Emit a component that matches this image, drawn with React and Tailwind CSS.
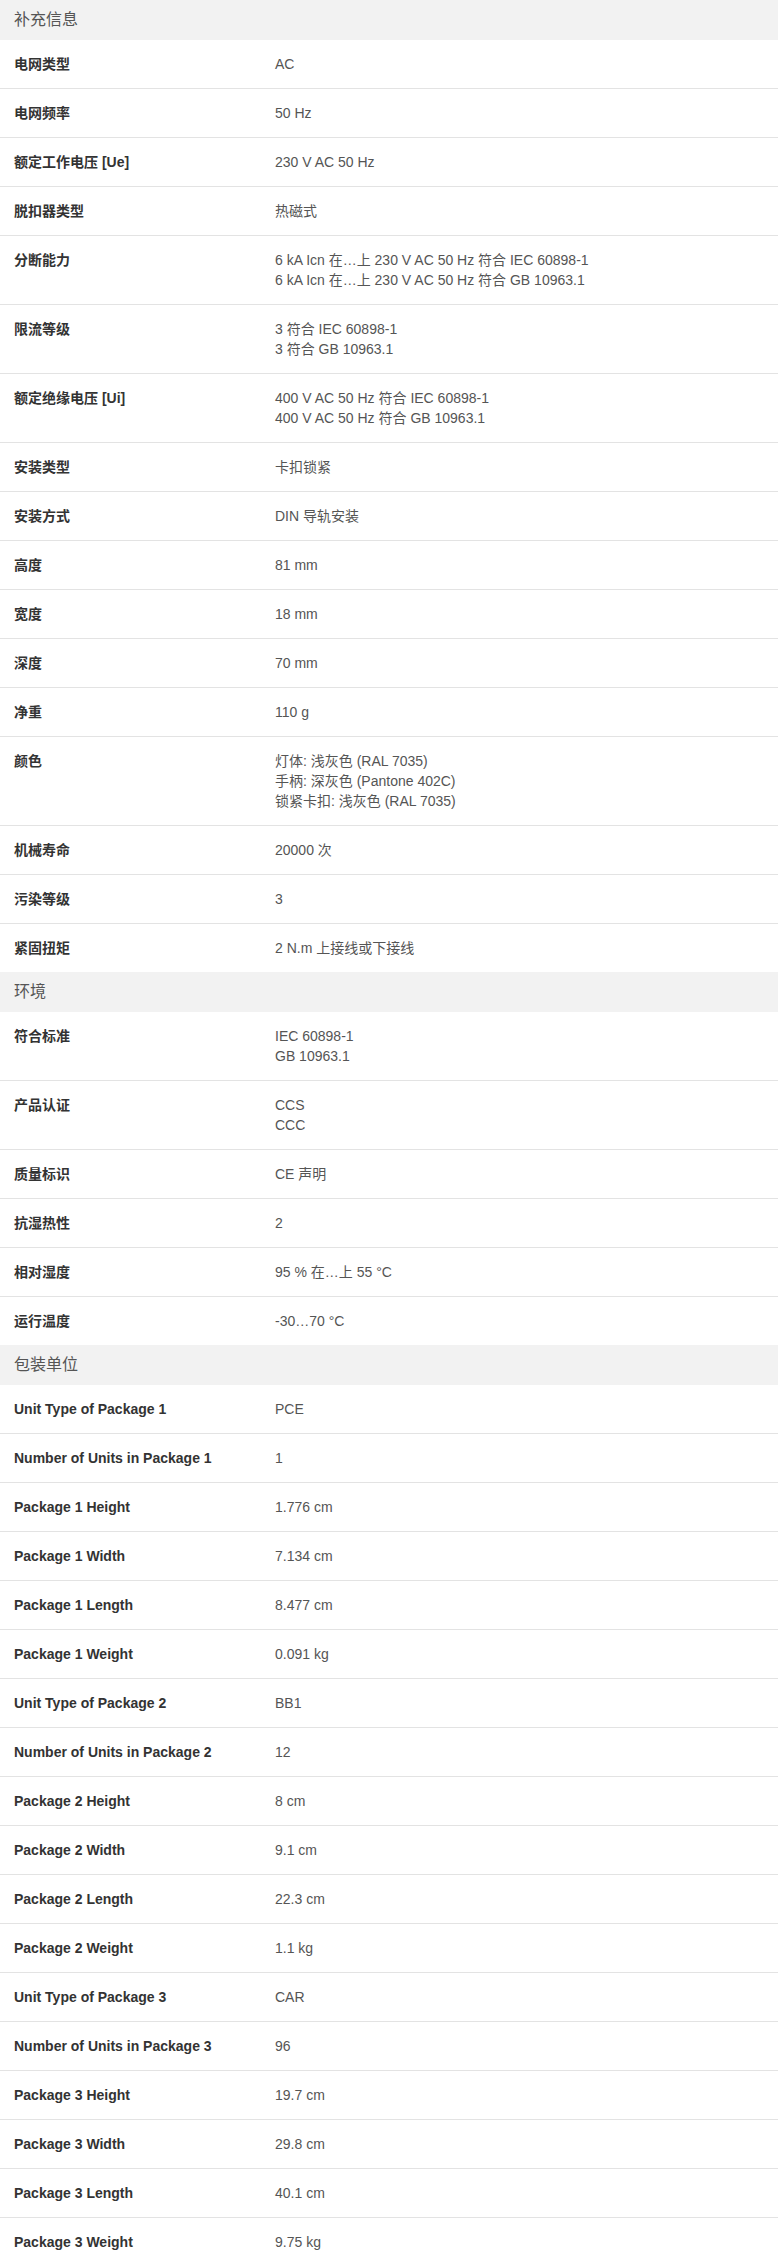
const FONT = "font-['Liberation_Sans','Noto_Sans_CJK_SC',sans-serif]"

const sections = [
  {
    title: '补充信息',
    rows: [
      ['电网类型', ['AC']],
      ['电网频率', ['50 Hz']],
      ['额定工作电压 [Ue]', ['230 V AC 50 Hz']],
      ['脱扣器类型', ['热磁式']],
      ['分断能力', ['6 kA Icn 在…上 230 V AC 50 Hz 符合 IEC 60898-1', '6 kA Icn 在…上 230 V AC 50 Hz 符合 GB 10963.1']],
      ['限流等级', ['3 符合 IEC 60898-1', '3 符合 GB 10963.1']],
      ['额定绝缘电压 [Ui]', ['400 V AC 50 Hz 符合 IEC 60898-1', '400 V AC 50 Hz 符合 GB 10963.1']],
      ['安装类型', ['卡扣锁紧']],
      ['安装方式', ['DIN 导轨安装']],
      ['高度', ['81 mm']],
      ['宽度', ['18 mm']],
      ['深度', ['70 mm']],
      ['净重', ['110 g']],
      ['颜色', ['灯体: 浅灰色 (RAL 7035)', '手柄: 深灰色 (Pantone 402C)', '锁紧卡扣: 浅灰色 (RAL 7035)']],
      ['机械寿命', ['20000 次']],
      ['污染等级', ['3']],
      ['紧固扭矩', ['2 N.m 上接线或下接线']],
    ],
  },
  {
    title: '环境',
    rows: [
      ['符合标准', ['IEC 60898-1', 'GB 10963.1']],
      ['产品认证', ['CCS', 'CCC']],
      ['质量标识', ['CE 声明']],
      ['抗湿热性', ['2']],
      ['相对湿度', ['95 % 在…上 55 °C']],
      ['运行温度', ['-30…70 °C']],
    ],
  },
  {
    title: '包装单位',
    rows: [
      ['Unit Type of Package 1', ['PCE']],
      ['Number of Units in Package 1', ['1']],
      ['Package 1 Height', ['1.776 cm']],
      ['Package 1 Width', ['7.134 cm']],
      ['Package 1 Length', ['8.477 cm']],
      ['Package 1 Weight', ['0.091 kg']],
      ['Unit Type of Package 2', ['BB1']],
      ['Number of Units in Package 2', ['12']],
      ['Package 2 Height', ['8 cm']],
      ['Package 2 Width', ['9.1 cm']],
      ['Package 2 Length', ['22.3 cm']],
      ['Package 2 Weight', ['1.1 kg']],
      ['Unit Type of Package 3', ['CAR']],
      ['Number of Units in Package 3', ['96']],
      ['Package 3 Height', ['19.7 cm']],
      ['Package 3 Width', ['29.8 cm']],
      ['Package 3 Length', ['40.1 cm']],
      ['Package 3 Weight', ['9.75 kg']],
    ],
  },
]

function Row({ label, values }) {
  return (
    <div className="flex border-b border-[#e3e3e3] last:border-b-0">
      <div className="w-[261px] shrink-0 px-[14px] py-[14px] text-[14px] leading-5 font-bold text-[#333]">
        {label}
      </div>
      <div className="flex-1 px-[14px] py-[14px] text-[14px] leading-5 text-[#555]">
        {values.map((v, i) => (
          <div key={i}>{v}</div>
        ))}
      </div>
    </div>
  )
}

export default function App() {
  return (
    <div className={`w-[778px] bg-white ${FONT}`}>
      {sections.map((s) => (
        <div key={s.title}>
          <div className="h-10 flex items-center px-[14px] bg-[#f2f2f2] text-[16px] text-[#555]">
            {s.title}
          </div>
          <div>
            {s.rows.map(([label, values]) => (
              <Row key={label} label={label} values={values} />
            ))}
          </div>
        </div>
      ))}
    </div>
  )
}
